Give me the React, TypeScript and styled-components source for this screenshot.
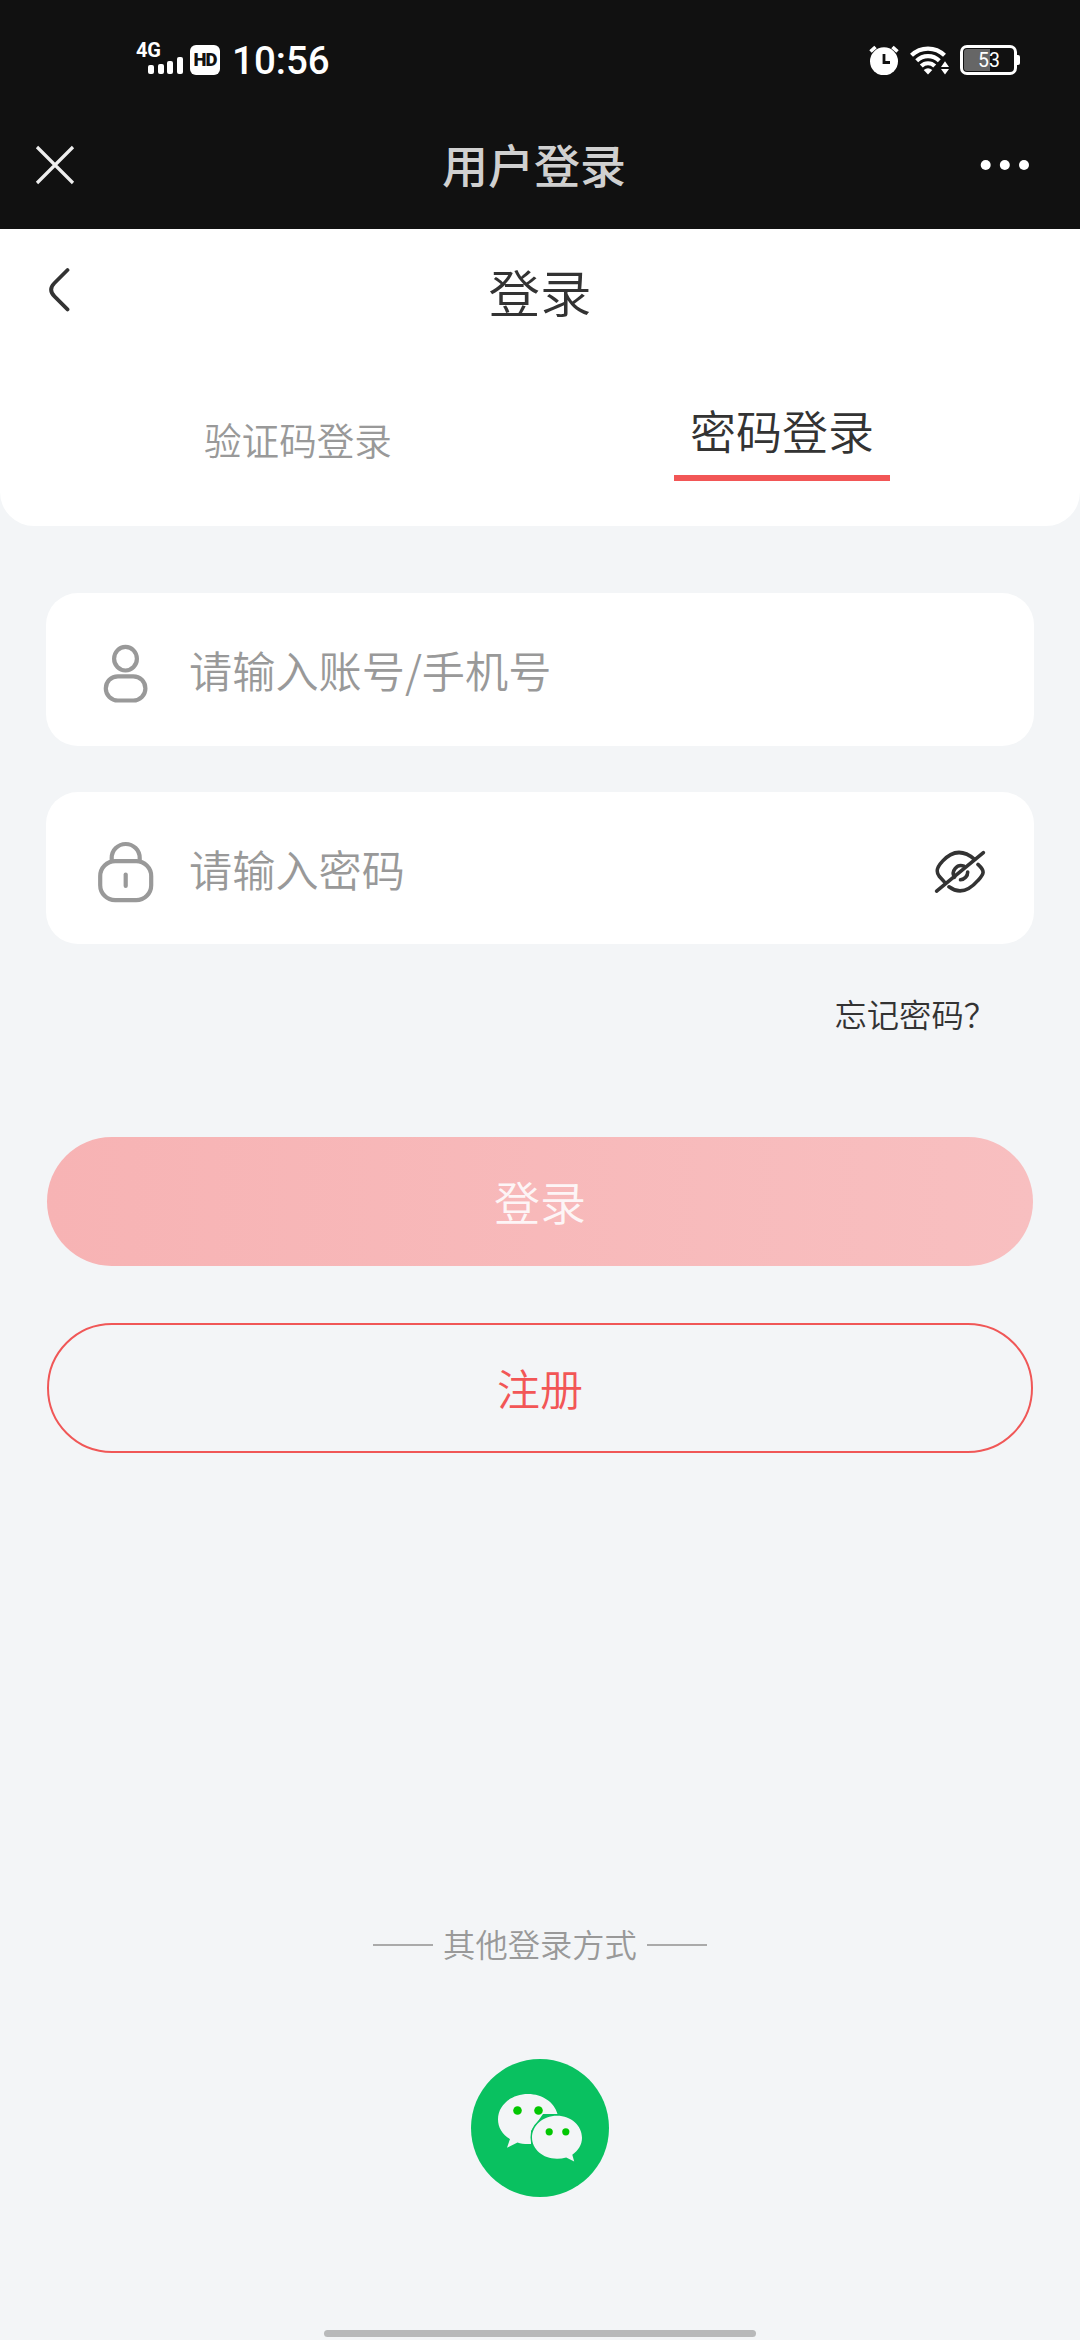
import React, { useState } from "react";
import styled, { createGlobalStyle } from "styled-components";

const GlobalStyle = createGlobalStyle`
  *, *::before, *::after { box-sizing: border-box; }
  body {
    margin: 0;
    background: #f3f5f7;
    font-family: "Noto Sans CJK SC", "Noto Sans", sans-serif;
    font-weight: 350;
    color: #333;
  }
  svg { display: block; flex: none; }
  button, input { font-family: inherit; font-weight: inherit; }
`;

const Screen = styled.div`
  width: 1080px;
  height: 2340px;
  overflow: hidden;
  display: flex;
  flex-direction: column;
  background: #f3f5f7;
`;

const StatusBar = styled.div`
  height: 116px;
  padding: 43px 60px 0 136px;
  display: flex;
  justify-content: space-between;
  align-items: flex-start;
  background: #111;
  color: #fff;
`;

const StatusGroup = styled.div<{ $gap: number }>`
  display: flex;
  align-items: flex-start;
  gap: ${(p) => p.$gap}px;
`;

const Signal = styled.div`
  width: 47px;
  height: 32px;
  display: flex;
  flex-direction: column;
  justify-content: space-between;
`;

const NetworkType = styled.span`
  font: 700 20px/15px Roboto, sans-serif;
  height: 15px;
  letter-spacing: -0.3px;
`;

const Bars = styled.div`
  height: 17px;
  margin: -1px 0 1px 12px;
  display: flex;
  align-items: flex-end;
  gap: 3.6px;
`;

const Bar = styled.i<{ $h: number }>`
  width: 6px;
  height: ${(p) => p.$h}px;
  border-radius: 2px;
  background: #fff;
`;

const HdBadge = styled.span`
  width: 30px;
  height: 30px;
  margin: 2px 0 0 7px;
  border-radius: 6px;
  background: #fff;
  color: #111;
  font: 900 18.5px/31px Roboto, sans-serif;
  letter-spacing: -1px;
  text-align: center;
`;

const Clock = styled.span`
  margin-left: 12px;
  font: 500 38.5px/36px Roboto, sans-serif;
  height: 36px;
`;

const Battery = styled.div`
  position: relative;
  width: 57px;
  height: 30px;
  margin-top: 2px;
  margin-right: 3px;
  padding: 1px;
  border: 3px solid #fff;
  border-radius: 7px;
  &::after {
    content: "";
    position: absolute;
    right: -6px;
    top: 7px;
    width: 3px;
    height: 10px;
    border-radius: 0 2px 2px 0;
    background: #fff;
  }
`;

const BatteryLevel = styled.div`
  width: 26px;
  height: 22px;
  border-radius: 3px 0 0 3px;
  background: #666;
`;

const BatteryText = styled.span`
  position: absolute;
  inset: 0;
  padding-left: 1px;
  text-align: center;
  font: 400 19.5px/25px Roboto, sans-serif;
`;

const NavBar = styled.div`
  height: 113px;
  padding: 0 50px 16px 35px;
  display: grid;
  grid-template-columns: 45px 1fr 50px;
  align-items: center;
  background: #111;
`;

const NavTitle = styled.h1`
  margin: 0 0 4px 8px;
  text-align: center;
  font-size: 46px;
  line-height: 66px;
  font-weight: 500;
  color: #d0d0d0;
`;

const Panel = styled.header`
  height: 297px;
  border-radius: 0 0 34px 34px;
  background: #fff;
`;

const PageHead = styled.div`
  height: 122px;
  padding: 0 48px;
  display: grid;
  grid-template-columns: 24px 1fr 24px;
  align-items: center;
`;

const PageTitle = styled.h2`
  margin: 2px 0 0;
  text-align: center;
  font-size: 51.5px;
  line-height: 74px;
  font-weight: inherit;
`;

const Tabs = styled.div`
  padding: 0 56px;
  display: grid;
  grid-template-columns: 1fr 1fr;
  justify-items: center;
  height: 130px;
  align-items: end;
`;

const Tab = styled.button<{ $active: boolean }>`
  width: 216px;
  height: ${(p) => (p.$active ? 87 : 70)}px;
  margin: 0;
  padding: 0;
  border: 0;
  border-bottom: 6px solid ${(p) => (p.$active ? "#f25656" : "transparent")};
  background: none;
  color: ${(p) => (p.$active ? "#333" : "#999")};
  font-size: ${(p) => (p.$active ? 46 : 37.6)}px;
  line-height: ${(p) => (p.$active ? 70 : 56)}px;
  text-align: center;
  white-space: nowrap;
  display: flex;
  align-items: flex-start;
  justify-content: center;
`;

const Form = styled.form`
  padding: 67px 46px 0;
  display: flex;
  flex-direction: column;
`;

const Field = styled.label`
  height: 152.5px;
  margin-bottom: 46px;
  padding: 0 46px 0 50px;
  display: flex;
  align-items: center;
  border-radius: 32px;
  background: #fff;
  svg { margin-top: 8px; }
`;

const FieldInput = styled.input`
  flex: 1;
  min-width: 0;
  height: 64px;
  margin: 0 0 0 33px;
  padding: 0;
  border: 0;
  outline: 0;
  background: none;
  font-size: 43.2px;
  color: #333;
  &::placeholder { color: #999; opacity: 1; }
`;

const EyeButton = styled.button`
  padding: 0;
  border: 0;
  background: none;
`;

const Forgot = styled.a`
  align-self: flex-end;
  margin-right: 38px;
  font-size: 32.3px;
  line-height: 46px;
`;

const Submit = styled.button<{ $outline?: boolean }>`
  height: ${(p) => (p.$outline ? 130 : 129)}px;
  margin: 0 1px;
  padding: 0 0 2px;
  border-radius: 65px;
  border: ${(p) => (p.$outline ? "2px solid #f05757" : "0")};
  background: ${(p) =>
    p.$outline ? "none" : "linear-gradient(90deg, #f7b3b4, #f8bfc0)"};
  color: ${(p) => (p.$outline ? "#f25656" : "#fdf5f6")};
  font-size: ${(p) => (p.$outline ? 43 : 46)}px;
  line-height: 1.45;
`;

const Actions = styled.div`
  margin-top: 101px;
  display: flex;
  flex-direction: column;
  gap: 57px;
`;

const Other = styled.div`
  margin-top: 466px;
  display: flex;
  flex-direction: column;
  align-items: center;
`;

const OtherLabel = styled.div`
  display: flex;
  align-items: center;
  gap: 10px;
  font-size: 32.3px;
  line-height: 48px;
  color: #999;
  &::before, &::after {
    content: "";
    width: 60px;
    height: 2px;
    margin-top: 4px;
    background: #aaa;
  }
`;

const WechatButton = styled.button`
  margin-top: 92px;
  padding: 0;
  border: 0;
  background: none;
`;

const HomeIndicator = styled.div`
  width: 432px;
  height: 7px;
  margin: auto auto 3px;
  border-radius: 4px;
  background: #b8b9ba;
`;

const AlarmIcon = () => (
  <svg width="30" height="32" viewBox="0 0 30 32">
    <circle cx="15" cy="18.3" r="14" fill="#fff" />
    <path d="M1.5 8.5 6.5 4M28.5 8.5 23.5 4" stroke="#fff" strokeWidth="3.6" />
    <path d="M15 11v8.5h6" fill="none" stroke="#111" strokeWidth="2.8" />
  </svg>
);

const WifiIcon = () => (
  <svg width="40" height="32" viewBox="0 0 40 32">
    <g fill="none" stroke="#fff" strokeWidth="4.2">
      <path d="M1.5 12.3a23.5 23.5 0 0 1 33 0" />
      <path d="M6.7 17.7a16.2 16.2 0 0 1 22.6 0" />
      <path d="M11.3 23a9.5 9.5 0 0 1 13.4 0" />
    </g>
    <path d="M13.7 27q4.3-3.6 8.6 0L18 31.5z" fill="#fff" />
    <path d="M35 18.3 39 24h-8zM35 31.5 39 26h-8z" fill="#fff" />
  </svg>
);

const CloseIcon = () => (
  <svg width="40" height="40" viewBox="0 0 40 40">
    <path d="M2 2 38 38M38 2 2 38" stroke="#eee" strokeWidth="3.2" />
  </svg>
);

const MoreIcon = () => (
  <svg width="50" height="12" viewBox="0 0 50 12">
    <g fill="#fff">
      <circle cx="5.7" cy="6" r="5" />
      <circle cx="24.8" cy="6" r="5" />
      <circle cx="44" cy="6" r="5" />
    </g>
  </svg>
);

const BackIcon = () => (
  <svg width="24" height="46" viewBox="0 0 24 46">
    <path
      d="M19.500 3 6.500 16Q-.2 22.700 6.500 29.400L19.500 42.400"
      fill="none"
      stroke="#333"
      strokeWidth="3.8"
      strokeLinecap="round"
    />
  </svg>
);

const UserIcon = () => (
  <svg width="60" height="64" viewBox="0 0 60 64">
    <g fill="none" stroke="#999" strokeWidth="4.2">
      <ellipse cx="29.5" cy="17.7" rx="11.4" ry="11.8" />
      <rect x="9.8" y="35.3" width="39.6" height="24.2" rx="12.1" />
    </g>
  </svg>
);

const LockIcon = () => (
  <svg width="60" height="64" viewBox="0 0 60 64">
    <g fill="none" stroke="#999" strokeWidth="4.2" strokeLinecap="round">
      <rect x="4.2" y="21.2" width="51" height="39" rx="15" />
      <path d="M15.7 21V18a14 14 0 0 1 28 0v3" />
      <path d="M29.7 34.5v11.5" />
    </g>
  </svg>
);

const EyeOffIcon = () => (
  <svg width="56" height="48" viewBox="0 0 56 48">
    <g
      fill="none"
      stroke="#333"
      strokeWidth="3.6"
      strokeLinecap="round"
      strokeLinejoin="round"
    >
      <path d="M4.6 43.2 51.4 4.6" />
      <path d="M42.6 11.4C31.5 1.8 20.5 2.2 10.3 13.4 4.2 19.7 4 24 7.2 28.3L13 34.6" />
      <path d="M46 16.4C53 22.8 52.6 25.5 46 32.4 35.8 44.2 26.6 46 17 38.8" />
      <path d="M22.5 29.3A7.7 7.7 0 0 1 32 18.2" />
      <path d="M35.7 24A7.7 7.7 0 0 1 28.5 31.8" />
    </g>
  </svg>
);

const WechatIcon = () => (
  <svg width="138" height="138" viewBox="0 0 138 138">
    <circle cx="69" cy="69" r="69" fill="#09c160" />
    <path
      d="M57 35c-16.500 0-30 10.800-30 25.200 0 8.300 4.300 15.200 12 19.800l-3 8.800 10.500-5.300c3.500 1.200 8 1.800 13.500 1.500V72l12-17H86.500C83.500 43.500 71.500 35 57 35z"
      fill="#f3f5f7"
    />
    <path
      d="M86 56.700c14.200 0 25 9.800 25 22 0 7-3.600 12.700-9.700 17l1.900 6.800-8-4c-2.900.8-6 1.200-9.200 1.200-14.200 0-25-9.500-25-21.200S71.800 56.700 86 56.700z"
      fill="#f3f5f7"
      stroke="#09c160"
      strokeWidth="3"
      paintOrder="stroke"
    />
    <g fill="#02c702">
      <circle cx="46.500" cy="51.500" r="4.300" />
      <circle cx="67.500" cy="51.500" r="4.300" />
      <circle cx="78.200" cy="72.800" r="3.600" />
      <circle cx="94.800" cy="72.800" r="3.600" />
    </g>
  </svg>
);

export default function App() {
  const [tab, setTab] = useState<"code" | "password">("password");

  return (
    <Screen>
      <GlobalStyle />
      <StatusBar>
        <StatusGroup $gap={0}>
          <Signal>
            <NetworkType>4G</NetworkType>
            <Bars>
              {[9, 10, 13, 17].map((h) => (
                <Bar key={h} $h={h} />
              ))}
            </Bars>
          </Signal>
          <HdBadge>HD</HdBadge>
          <Clock>10:56</Clock>
        </StatusGroup>
        <StatusGroup $gap={10.5}>
          <AlarmIcon />
          <WifiIcon />
          <Battery>
            <BatteryLevel />
            <BatteryText>53</BatteryText>
          </Battery>
        </StatusGroup>
      </StatusBar>
      <NavBar>
        <CloseIcon />
        <NavTitle>用户登录</NavTitle>
        <MoreIcon />
      </NavBar>

      <Panel>
        <PageHead>
          <BackIcon />
          <PageTitle>登录</PageTitle>
        </PageHead>
        <Tabs>
          <Tab $active={tab === "code"} onClick={() => setTab("code")}>
            验证码登录
          </Tab>
          <Tab $active={tab === "password"} onClick={() => setTab("password")}>
            密码登录
          </Tab>
        </Tabs>
      </Panel>

      <Form onSubmit={(e) => e.preventDefault()}>
        <Field>
          <UserIcon />
          <FieldInput placeholder="请输入账号/手机号" />
        </Field>
        <Field>
          <LockIcon />
          <FieldInput type="password" placeholder="请输入密码" />
          <EyeButton type="button">
            <EyeOffIcon />
          </EyeButton>
        </Field>
        <Forgot>忘记密码？</Forgot>
        <Actions>
          <Submit type="submit">登录</Submit>
          <Submit type="button" $outline>
            注册
          </Submit>
        </Actions>
      </Form>

      <Other>
        <OtherLabel>其他登录方式</OtherLabel>
        <WechatButton>
          <WechatIcon />
        </WechatButton>
      </Other>
      <HomeIndicator />
    </Screen>
  );
}
